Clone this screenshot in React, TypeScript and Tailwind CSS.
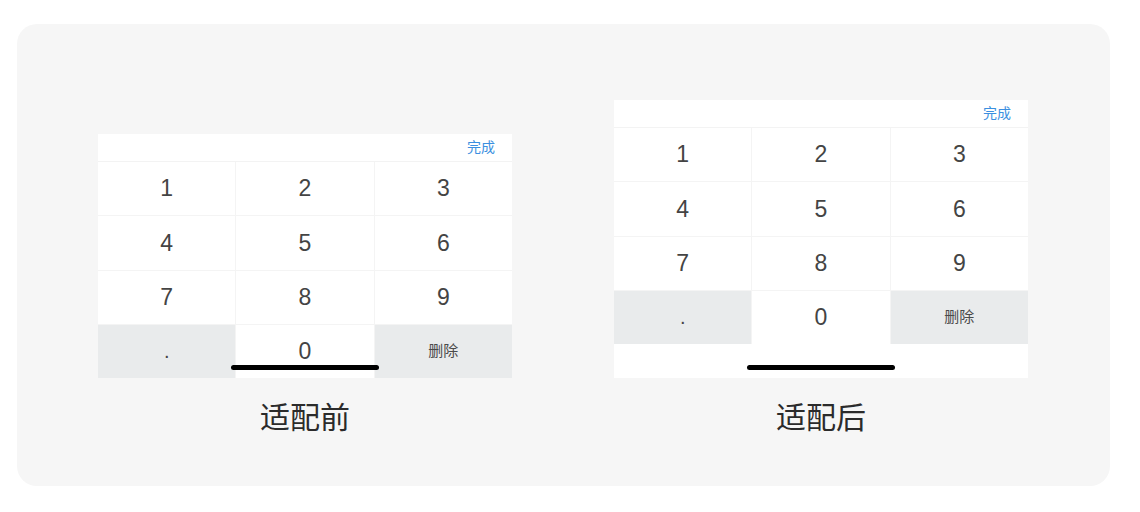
import React from "react";

const keys = ["1", "2", "3", "4", "5", "6", "7", "8", "9", ".", "0", "删除"];

const font = {
  fontFamily: '"Liberation Sans", "Noto Sans CJK SC", sans-serif',
};

function Keyboard({ safeArea }: { safeArea: boolean }) {
  return (
    <div className="relative w-[414px] bg-white" style={font}>
      <div className="flex h-[28px] items-center justify-end border-b border-[#f3f3f3] pr-[17px]">
        <span className="text-[14px] text-[#3b8fe0]">{"完成"}</span>
      </div>
      <div className="grid grid-cols-3 gap-px bg-[#f4f4f4]">
        {keys.map((k) => {
          const grey = k === "." || k === "删除";
          return (
            <div
              key={k}
              className={`flex h-[53.25px] items-center justify-center ${
                grey ? "bg-[#e9ebec]" : "bg-white"
              }`}
            >
              {k === "删除" ? (
                <span className="text-[15px] text-[#4a4a4a]">{k}</span>
              ) : k === "." ? (
                <span className="text-[20px] text-[#444]">{k}</span>
              ) : (
                <span className="text-[23px] text-[#444]">{k}</span>
              )}
            </div>
          );
        })}
      </div>
      {safeArea && <div className="h-[34px] bg-white" />}
      <div className="absolute bottom-[8px] left-1/2 h-[5px] w-[148px] -translate-x-1/2 rounded-full bg-black" />
    </div>
  );
}

export default function App() {
  return (
    <div className="h-[512px] w-[1140px] bg-white pt-[24px] pl-[17px]">
      <div className="flex h-[462px] w-[1093px] items-start gap-[102px] rounded-[20px] bg-[#f6f6f6] pt-[76px] pl-[81px]">
        <div className="flex flex-col items-center">
          <div className="flex h-[278px] items-end">
            <Keyboard safeArea={false} />
          </div>
          <p
            className="mt-[21px] text-[30px] leading-[38px] text-[#2b2b2b]"
            style={font}
          >
            {"适配前"}
          </p>
        </div>
        <div className="flex flex-col items-center">
          <div className="flex h-[278px] items-end">
            <Keyboard safeArea={true} />
          </div>
          <p
            className="mt-[21px] text-[30px] leading-[38px] text-[#2b2b2b]"
            style={font}
          >
            {"适配后"}
          </p>
        </div>
      </div>
    </div>
  );
}
